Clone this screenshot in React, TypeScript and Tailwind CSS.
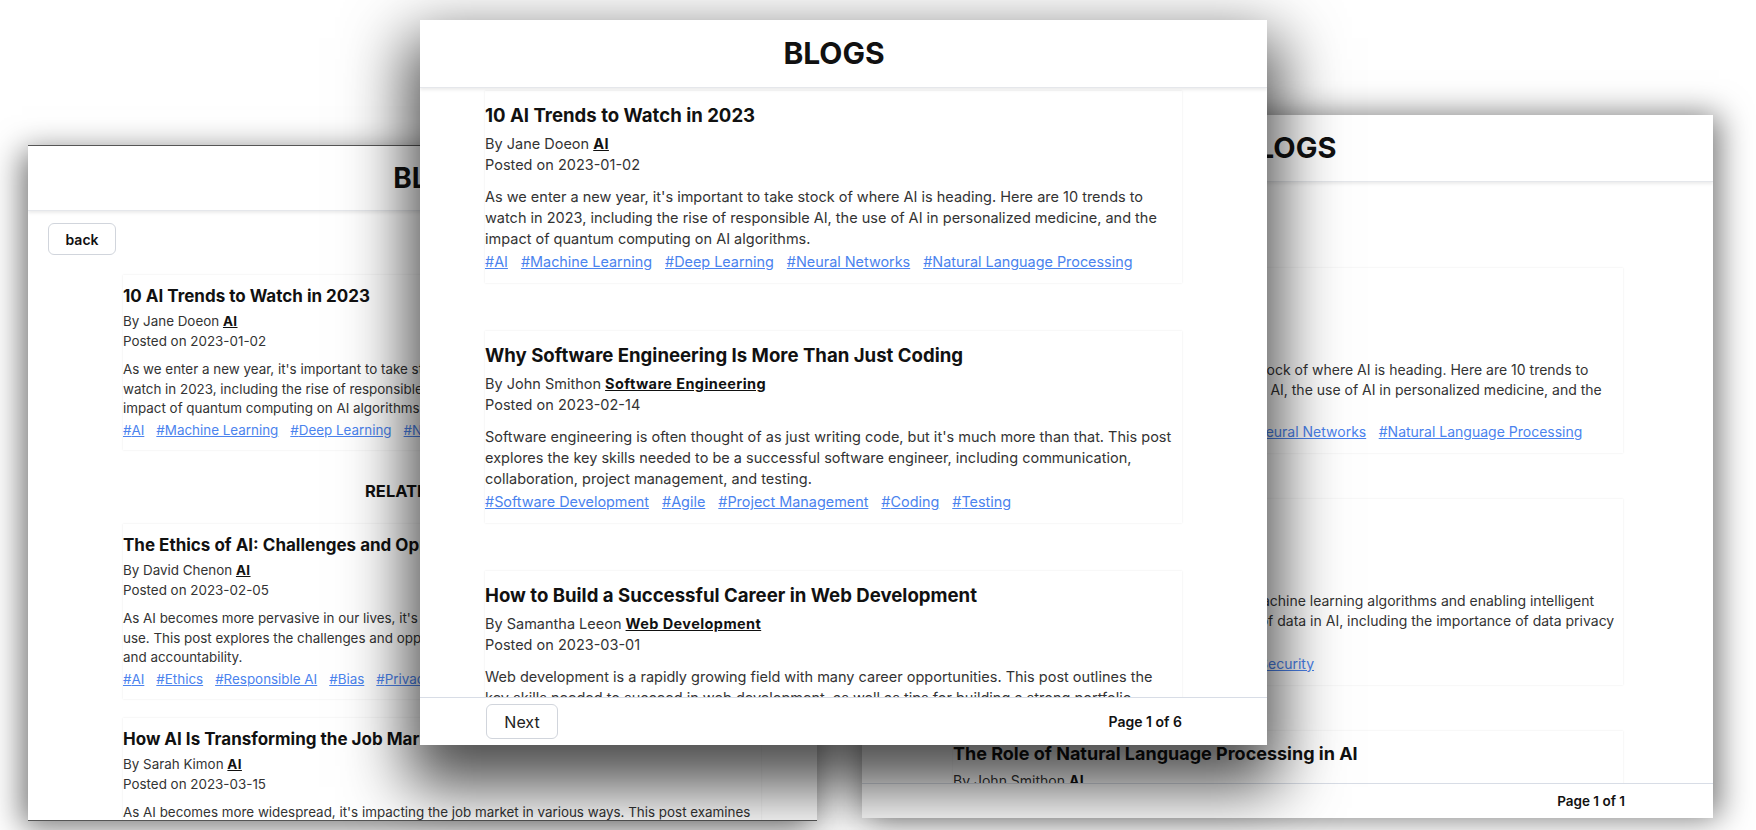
import React from 'react';

type Post = {
  title: string;
  author: string;
  category: string;
  date: string;
  lines: string[];
  tags: string[];
};

const trends: Post = {
  title: '10 AI Trends to Watch in 2023',
  author: 'Jane Doe',
  category: 'AI',
  date: '2023-01-02',
  lines: [
    "As we enter a new year, it's important to take stock of where AI is heading. Here are 10 trends to",
    'watch in 2023, including the rise of responsible AI, the use of AI in personalized medicine, and the',
    'impact of quantum computing on AI algorithms.',
  ],
  tags: ['AI', 'Machine Learning', 'Deep Learning', 'Neural Networks', 'Natural Language Processing'],
};

const blogPosts: Post[] = [
  trends,
  {
    title: 'Why Software Engineering Is More Than Just Coding',
    author: 'John Smith',
    category: 'Software Engineering',
    date: '2023-02-14',
    lines: [
      "Software engineering is often thought of as just writing code, but it's much more than that. This post",
      'explores the key skills needed to be a successful software engineer, including communication,',
      'collaboration, project management, and testing.',
    ],
    tags: ['Software Development', 'Agile', 'Project Management', 'Coding', 'Testing'],
  },
  {
    title: 'How to Build a Successful Career in Web Development',
    author: 'Samantha Lee',
    category: 'Web Development',
    date: '2023-03-01',
    lines: [
      'Web development is a rapidly growing field with many career opportunities. This post outlines the',
      'key skills needed to succeed in web development, as well as tips for building a strong portfolio',
      'and landing your first job.',
    ],
    tags: ['Web Development', 'Career', 'Portfolio', 'Jobs'],
  },
];

const relatedPosts: Post[] = [
  {
    title: 'The Ethics of AI: Challenges and Opportunities',
    author: 'David Chen',
    category: 'AI',
    date: '2023-02-05',
    lines: [
      "As AI becomes more pervasive in our lives, it's important to consider the ethical implications of its",
      'use. This post explores the challenges and opportunities of building ethical AI, including bias, privacy,',
      'and accountability.',
    ],
    tags: ['AI', 'Ethics', 'Responsible AI', 'Bias', 'Privacy'],
  },
  {
    title: 'How AI Is Transforming the Job Market',
    author: 'Sarah Kim',
    category: 'AI',
    date: '2023-03-15',
    lines: [
      "As AI becomes more widespread, it's impacting the job market in various ways. This post examines",
      'the jobs most at risk of automation and the new roles that AI is creating.',
    ],
    tags: ['AI', 'Jobs', 'Automation'],
  },
];

const categoryPosts: Post[] = [
  trends,
  {
    title: 'Why Data Matters in AI',
    author: 'Jane Doe',
    category: 'AI',
    date: '2023-02-20',
    lines: [
      'Data is the foundation of modern AI, feeding machine learning algorithms and enabling intelligent',
      'decision-making. This post discusses the role of data in AI, including the importance of data privacy',
      'and security.',
    ],
    tags: ['AI', 'Data', 'Machine Learning', 'Privacy', 'Security'],
  },
  {
    title: 'The Role of Natural Language Processing in AI',
    author: 'John Smith',
    category: 'AI',
    date: '2023-03-10',
    lines: ['Natural language processing lets machines understand human language.'],
    tags: ['AI', 'NLP'],
  },
];

const sizes = {
  md: {
    card: 'pt-[10px] pb-[11px] mb-12',
    title: 'text-[18.6px] leading-[28px]',
    text: 'text-[14.5px] leading-[21px]',
    meta: 'mt-1',
    desc: 'mt-[11px]',
    tags: 'mt-[2px] gap-x-[13px] text-[14.4px] leading-[21px]',
  },
  sm: {
    card: 'pt-[9.5px] pb-[10.5px] mb-[46px]',
    title: 'text-[18px] leading-[27px]',
    text: 'text-[14px] leading-[20.3px]',
    meta: 'mt-[4px]',
    desc: 'mt-[10.5px]',
    tags: 'mt-[2px] gap-x-[12.5px] text-[14px] leading-[20.3px]',
  },
  xs: {
    card: 'pt-[9px] pb-[10px] mb-[19px]',
    title: 'text-[17px] leading-[25px]',
    text: 'text-[13.4px] leading-[19.5px]',
    meta: 'mt-[3px]',
    desc: 'mt-[9px]',
    tags: 'mt-[2px] gap-x-[12px] text-[13.4px] leading-[19.5px]',
  },
};

type Size = keyof typeof sizes;

const BlogCard = ({ post, size }: { post: Post; size: Size }) => {
  const s = sizes[size];
  return (
    <div className={`${s.card} shrink-0 shadow-[0_0_2px_rgba(0,0,0,0.09)] bg-white`}>
      <h3 className={`${s.title} font-bold text-[#111] whitespace-nowrap`}>{post.title}</h3>
      <div className={`${s.text} ${s.meta} text-[#333]`}>
        <p className="whitespace-nowrap">
          By {post.author}on{' '}
          <span className="font-bold text-[#111] underline tracking-[0.4px]">{post.category}</span>
        </p>
        <p>Posted on {post.date}</p>
      </div>
      <div className={`${s.text} ${s.desc} text-[#333]`}>
        {post.lines.map((line, i) => (
          <p key={i} className="whitespace-nowrap">
            {line}
          </p>
        ))}
      </div>
      <div className={`${s.tags} flex text-[#4b83ee]`}>
        {post.tags.map((tag) => (
          <span key={tag} className="underline whitespace-nowrap">
            #{tag}
          </span>
        ))}
      </div>
    </div>
  );
};

const BackButton = () => (
  <button className="ml-5 mt-3 w-[68px] h-8 shrink-0 border border-gray-300 rounded-md bg-white text-[14px] font-semibold text-[#111] self-start">
    back
  </button>
);

const App = () => {
  return (
    <div className="relative w-[1756px] h-[830px] overflow-hidden bg-white font-['Inter',sans-serif]">
      {/* left window: post details */}
      <div className="absolute z-[1] left-[28px] top-[145px] w-[789px] h-[676px] bg-white border-y border-[#555] flex flex-col overflow-hidden shadow-[-6px_6px_30px_rgba(0,0,0,0.55)]">
        <header className="relative z-10 h-[65px] shrink-0 border-b border-gray-200 shadow-[0_2px_3px_rgba(0,0,0,0.08)] flex items-center justify-center pl-[36px]">
          <h1 className="text-[28px] font-bold text-[#111]">BLOGS</h1>
        </header>
        <div className="flex-1 flex flex-col overflow-hidden">
          <BackButton />
          <div className="ml-[95px] w-[638px] mt-5 shrink-0">
            <BlogCard post={trends} size="xs" />
            <h2 className="mt-[28px] mb-[20px] text-[16.5px] leading-[26px] font-bold text-center text-[#111] pr-[20px]">
              RELATED POSTS
            </h2>
            {relatedPosts.map((post) => (
              <BlogCard key={post.title} post={post} size="xs" />
            ))}
          </div>
        </div>
      </div>

      {/* right window: category list */}
      <div className="absolute z-[1] left-[862px] top-[115px] w-[851px] h-[703px] bg-white flex flex-col overflow-hidden shadow-[6px_0_30px_rgba(0,0,0,0.55)]">
        <header className="relative z-10 h-[67px] shrink-0 border-b border-gray-200 shadow-[0_2px_3px_rgba(0,0,0,0.08)] flex items-center justify-center">
          <h1 className="text-[29px] font-bold text-[#111]">BLOGS</h1>
        </header>
        <div className="flex-1 flex flex-col overflow-hidden">
          <BackButton />
          <div className="ml-[91px] w-[670px] mt-[42px] shrink-0">
            {categoryPosts.map((post) => (
              <BlogCard key={post.title} post={post} size="sm" />
            ))}
          </div>
        </div>
        <footer className="h-[35px] shrink-0 border-t border-[#d8dde6] flex items-center justify-end pr-[88px]">
          <span className="text-[13.5px] font-semibold text-[#111]">Page 1 of 1</span>
        </footer>
      </div>

      {/* middle window: blog list */}
      <div className="absolute z-[3] left-[420px] top-[20px] w-[847px] h-[725px] bg-white flex flex-col overflow-hidden shadow-[0_30px_60px_12px_rgba(0,0,0,0.7)]">
        <header className="relative z-10 h-[68px] shrink-0 border-b border-gray-200 shadow-[0_2px_3px_rgba(0,0,0,0.08)] flex items-center justify-center pr-[19px]">
          <h1 className="text-[30px] font-bold text-[#111]">BLOGS</h1>
        </header>
        <div className="flex-1 overflow-hidden">
          <div className="ml-[65px] w-[697px] pt-[3px]">
            {blogPosts.map((post) => (
              <BlogCard key={post.title} post={post} size="md" />
            ))}
          </div>
        </div>
        <footer className="h-[48px] shrink-0 border-t border-[#d8dde6] flex items-center justify-between pl-[66px] pr-[85px]">
          <button className="w-[72px] h-[35px] border border-gray-300 rounded-md text-[16px] text-[#222]">
            Next
          </button>
          <span className="text-[14px] font-semibold text-[#111]">Page 1 of 6</span>
        </footer>
      </div>
    </div>
  );
};

export default App;
